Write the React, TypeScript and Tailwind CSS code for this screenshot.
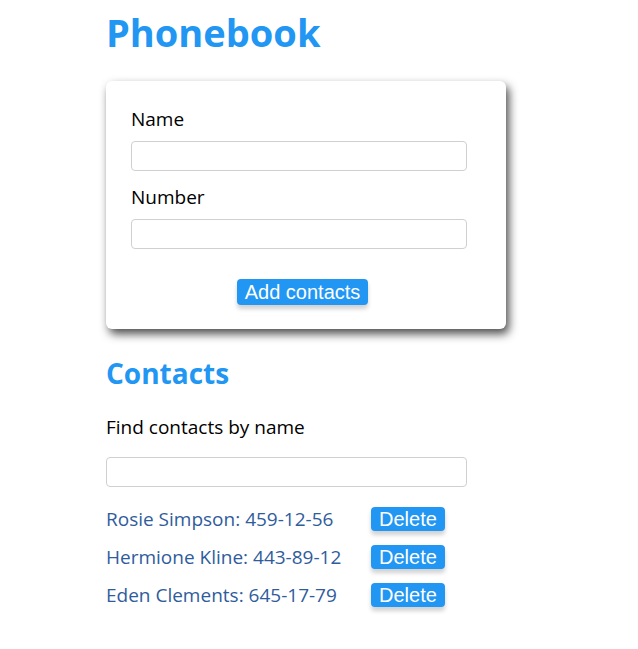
const contacts = [
  { id: "1", name: "Rosie Simpson", number: "459-12-56" },
  { id: "2", name: "Hermione Kline", number: "443-89-12" },
  { id: "3", name: "Eden Clements", number: "645-17-79" },
];

const font = "font-['Open_Sans',sans-serif]";
const btn =
  "font-['Liberation_Sans',Arial,sans-serif] text-[20px] leading-[23px] text-white bg-[#2196f3] rounded-[4px] px-2 shadow-[0_4px_4px_rgba(0,0,0,0.18)]";
const input = "block h-[30px] border border-[#d0d0d0] rounded-[4px] bg-white";

export default function App() {
  return (
    <div className={`${font} bg-white min-h-[649px] pl-[106px] pt-[8px] text-black`}>
      <h1 className="text-[38px] font-bold leading-[48px] text-[#2196f3]">Phonebook</h1>

      <form className="mt-[25px] w-[400px] bg-white rounded-[6px] px-[25px] pt-[24px] pb-[24px] shadow-[3px_5px_10px_rgba(0,0,0,0.7)]">
        <label className="block text-[19px] leading-[28px]">
          Name
          <input className={`${input} w-[336px] mt-[8px]`} />
        </label>
        <label className="block text-[19px] leading-[28px] mt-[12px]">
          Number
          <input className={`${input} w-[336px] mt-[8px]`} />
        </label>
        <div className="flex justify-center w-[336px] pl-[7px] mt-[30px]">
          <button type="button" className={`${btn} h-[26px]`}>
            Add contacts
          </button>
        </div>
      </form>

      <h2 className="mt-[27px] text-[28px] font-bold leading-[34px] text-[#2196f3]">Contacts</h2>

      <p className="mt-[23px] text-[19px] leading-[28px]">Find contacts by name</p>
      <input className={`${input} w-[361px] mt-[16px]`} />

      <ul className="mt-[20px] flex flex-col gap-[14px]">
        {contacts.map((c) => (
          <li key={c.id} className="flex items-center h-[24px]">
            <span className="w-[265px] text-[19px] leading-[28px] text-[#2f5c9c]">
              {c.name}: {c.number}
            </span>
            <button type="button" className={`${btn} h-[24px]`}>
              Delete
            </button>
          </li>
        ))}
      </ul>
    </div>
  );
}
